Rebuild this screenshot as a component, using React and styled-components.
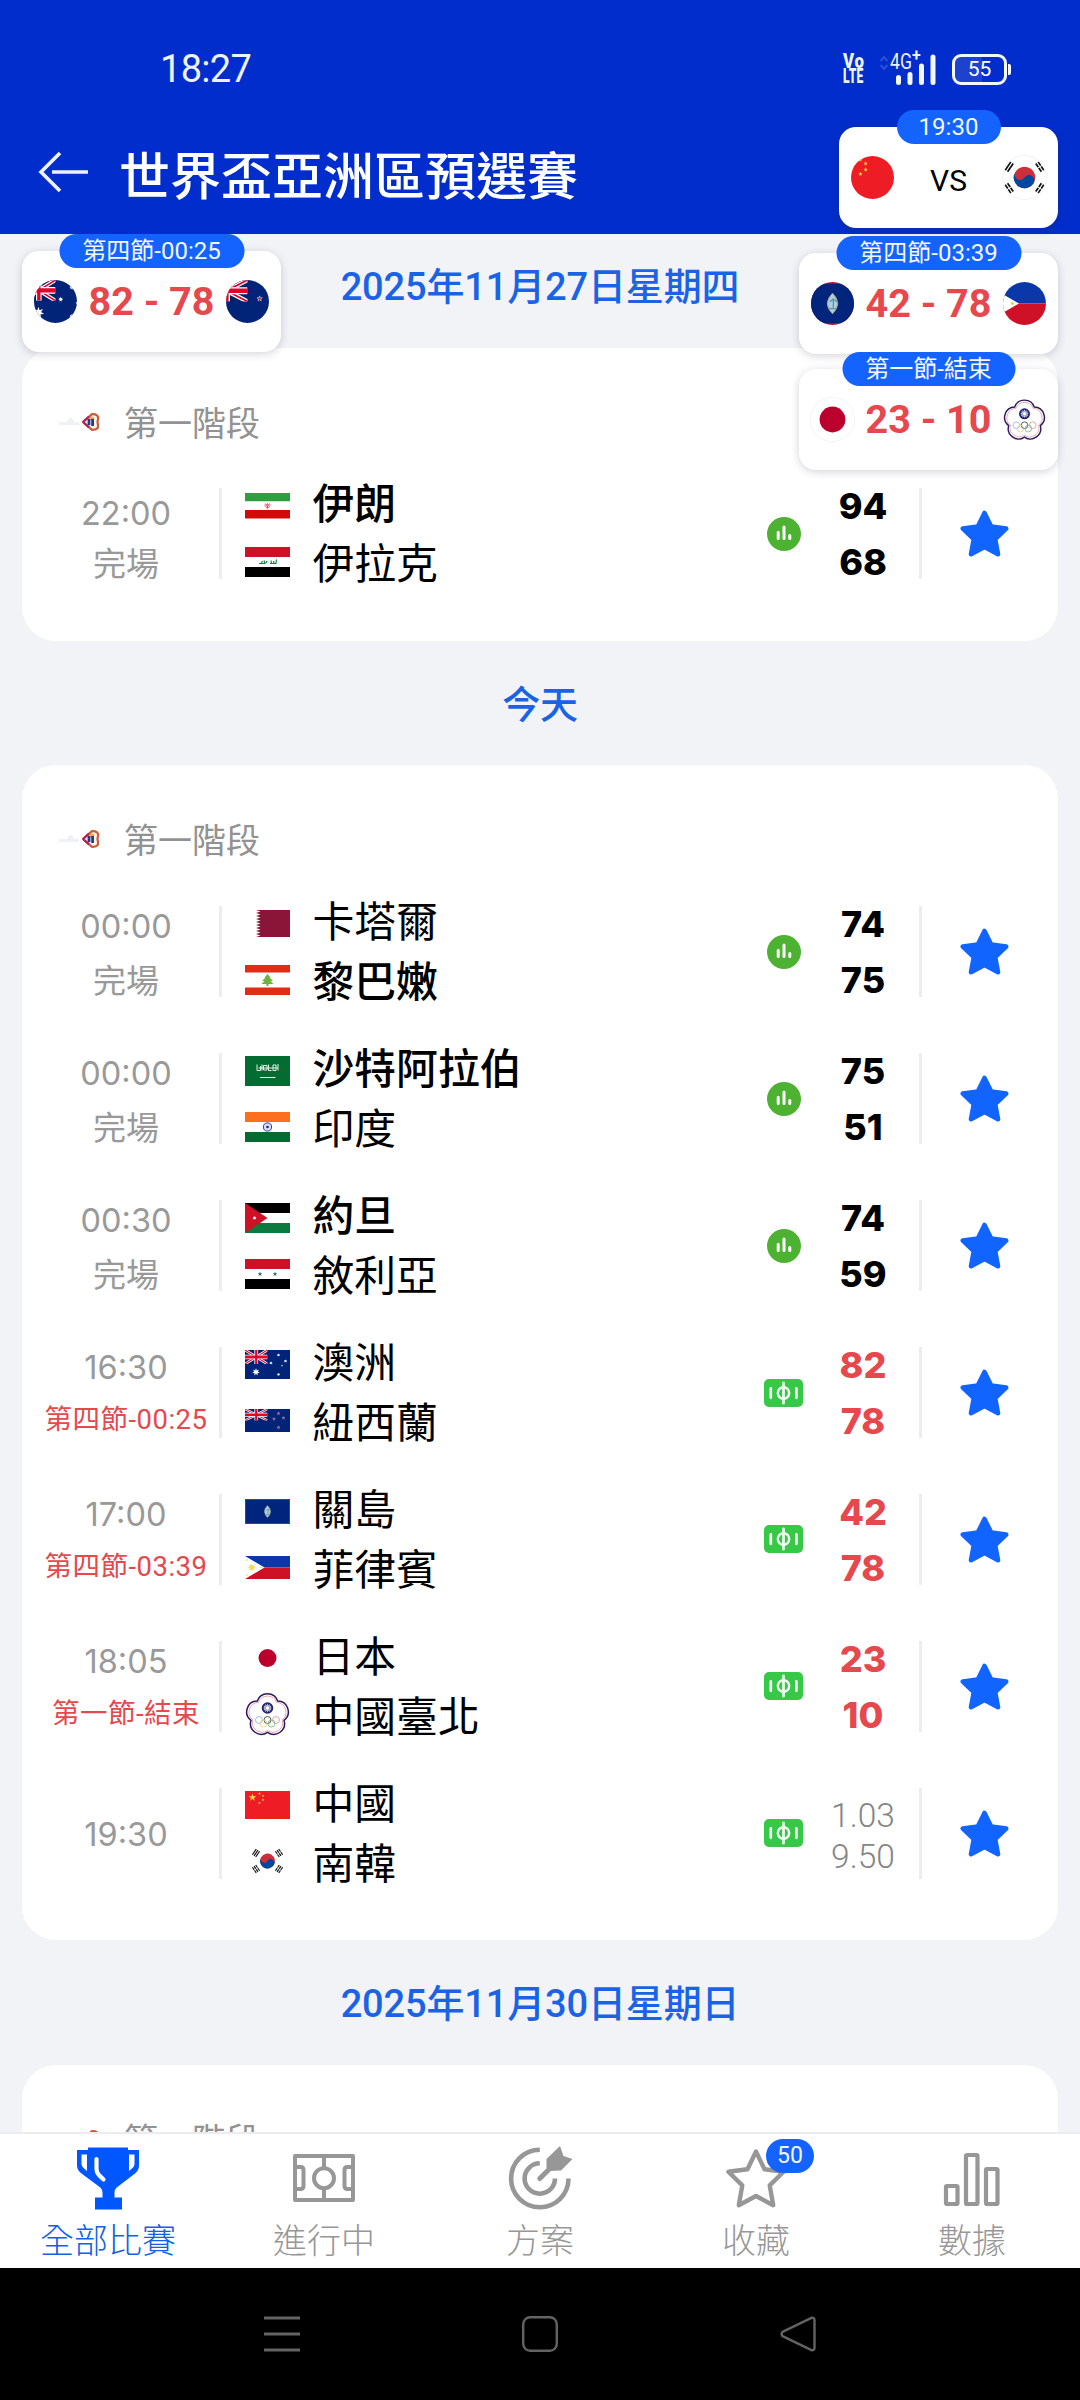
import React from "react";
import styled, { createGlobalStyle } from "styled-components";

const CJK = '"Noto Sans CJK TC", sans-serif';
const BODY = `Roboto, ${CJK}`;
const WIDE = `Inter, ${CJK}`;

const GlobalStyle = createGlobalStyle`
  *, *::before, *::after { box-sizing: border-box; }
  body { margin: 0; background: #f2f3f7; font-family: ${BODY}; }
  svg { display: block; flex: none; }
`;

/* ---------- flags ---------- */

function starPoints(cx, cy, r, n = 5, inner = 0.4) {
  return Array.from({ length: n * 2 }, (_, i) => {
    const rad = i % 2 ? r * inner : r;
    const a = -Math.PI / 2 + (i * Math.PI) / n;
    return `${(cx + rad * Math.cos(a)).toFixed(2)},${(cy + rad * Math.sin(a)).toFixed(2)}`;
  }).join(" ");
}

function blossomPath(cx, cy, valley, r) {
  const pts = Array.from({ length: 5 }, (_, i) => {
    const a = ((-126 + 72 * i) * Math.PI) / 180;
    return [(cx + valley * Math.cos(a)).toFixed(2), (cy + valley * Math.sin(a)).toFixed(2)];
  });
  return (
    `M${pts[0].join(" ")} ` +
    [1, 2, 3, 4, 0].map((i) => `A${r} ${r} 0 0 1 ${pts[i].join(" ")}`).join(" ") +
    "Z"
  );
}

const Jack = ({ h }) => (
  <svg x="0" y="0" width="45" height={h} viewBox="0 0 60 30" preserveAspectRatio="none">
    <rect width="60" height="30" fill="#012169" />
    <path d="M0 0L60 30M60 0L0 30" stroke="#fff" strokeWidth="6" />
    <path d="M0 0L60 30M60 0L0 30" stroke="#e4002b" strokeWidth="2.4" />
    <path d="M30 0V30M0 15H60" stroke="#fff" strokeWidth="10" />
    <path d="M30 0V30M0 15H60" stroke="#e4002b" strokeWidth="6" />
  </svg>
);

const Bands = ({ h, colors }) =>
  colors.map((c, i) => (
    <rect key={i} y={(h / colors.length) * i} width="90" height={h / colors.length} fill={c} />
  ));

const trigram = (x, y, a, broken) => (
  <g key={`${x}-${y}`} transform={`translate(${x} ${y}) rotate(${a})`} stroke="#111" strokeWidth="2.4">
    <path d="M-7 -4H7M-7 0H7M-7 4H7" />
    {broken && <path d="M0 -6V6" stroke="#fff" strokeWidth="1.4" />}
  </g>
);

const FLAGS = {
  iran: {
    h: 51,
    art: (
      <>
        <Bands h={51} colors={["#2f9e41", "#fff", "#d10a0a"]} />
        <path d="M45 20V31M41 21Q38 28 45 30Q52 28 49 21M43 22Q42 26 45 28M47 22Q48 26 45 28" fill="none" stroke="#d8262c" strokeWidth="1.3" />
      </>
    ),
  },
  iraq: {
    h: 60,
    art: (
      <>
        <Bands h={60} colors={["#ce1126", "#fff", "#000"]} />
        <path d="M28 33H40L38 27M33 32L35 28M50 33H63M53 32L52 27M58 32L57 28M62 32L63 25M42 32L44 28" fill="none" stroke="#1c8049" strokeWidth="2.4" />
      </>
    ),
  },
  qatar: {
    h: 54,
    art: (
      <>
        <rect width="90" height="54" fill="#fff" />
        <path d={"M90 0H22" + Array.from({ length: 9 }, (_, i) => `L31 ${i * 6 + 3}L22 ${i * 6 + 6}`).join("") + "H90Z"} fill="#8a1538" />
      </>
    ),
  },
  lebanon: {
    h: 60,
    art: (
      <>
        <rect width="90" height="60" fill="#fff" />
        <path d="M0 0H90V15H0ZM0 45H90V60H0Z" fill="#e12d14" />
        <path d="M45 18L51 25H49L56 32H51L57 38H47V42H43V38H33L39 32H34L41 25H39Z" fill="#6cb33f" />
      </>
    ),
  },
  saudi: {
    h: 60,
    art: (
      <>
        <rect width="90" height="60" fill="#046b31" />
        <path d="M24 17V29H31V20M34 17V29M37 19H44V28H37ZM47 17V29H53M56 18H62V29H56ZM66 16V29M27 24H66" fill="none" stroke="#e3f0e6" strokeWidth="2" />
        <path d="M30 43H61" stroke="#e3f0e6" strokeWidth="2" />
      </>
    ),
  },
  india: {
    h: 60,
    art: (
      <>
        <Bands h={60} colors={["#fb6f1f", "#fff", "#066a31"]} />
        <circle cx="45" cy="30" r="8.2" fill="#dcdcf6" stroke="#3a3aa8" strokeWidth="2" />
        <circle cx="45" cy="30" r="2.6" fill="#20208c" />
      </>
    ),
  },
  jordan: {
    h: 60,
    art: (
      <>
        <Bands h={60} colors={["#000", "#fff", "#0b7a3e"]} />
        <path d="M0 0L45 30L0 60Z" fill="#ce1126" />
        <polygon points={starPoints(19, 30, 4, 7, 0.5)} fill="#fff" />
      </>
    ),
  },
  syria: {
    h: 60,
    art: (
      <>
        <Bands h={60} colors={["#ce1126", "#fff", "#000"]} />
        <polygon points={starPoints(30, 30, 5)} fill="#2d6b5b" />
        <polygon points={starPoints(60, 30, 5)} fill="#2d6b5b" />
      </>
    ),
  },
  australia: {
    h: 58,
    art: (
      <>
        <rect width="90" height="58" fill="#012478" />
        <Jack h={28} />
        <polygon points={starPoints(22, 44, 8, 7, 0.45)} fill="#fff" />
        <polygon points={starPoints(67, 10, 3.6, 7, 0.45)} fill="#fff" />
        <polygon points={starPoints(52, 26, 3.6, 7, 0.45)} fill="#fff" />
        <polygon points={starPoints(81, 22, 3.6, 7, 0.45)} fill="#fff" />
        <polygon points={starPoints(67, 49, 3.6, 7, 0.45)} fill="#fff" />
        <polygon points={starPoints(74, 31, 2.2)} fill="#fff" />
      </>
    ),
  },
  newzealand: {
    h: 46,
    art: (
      <>
        <rect width="90" height="46" fill="#012478" />
        <Jack h={23} />
        {[[67, 9], [58, 20], [77, 18], [67, 37]].map(([x, y]) => (
          <polygon key={`${x}${y}`} points={starPoints(x, y, 3)} fill="#c8102e" stroke="#c9cbe6" strokeWidth="0.7" />
        ))}
      </>
    ),
  },
  guam: {
    h: 50,
    art: (
      <>
        <rect width="90" height="50" fill="#b3143a" />
        <rect x="2" y="2" width="86" height="46" fill="#01257c" />
        <path d="M45 13Q57 25 45 37Q33 25 45 13Z" fill="#a9cfe0" stroke="#c9a27a" strokeWidth="1" />
        <path d="M46 19V30M42 23Q46 18 50 23M41 31H49" fill="none" stroke="#5d93a0" strokeWidth="1.5" />
      </>
    ),
  },
  philippines: {
    h: 46,
    art: (
      <>
        <rect width="90" height="23" fill="#0b38a8" />
        <rect y="23" width="90" height="23" fill="#ce1126" />
        <path d="M0 0L39 23L0 46Z" fill="#fff" />
        <polygon points={starPoints(13.5, 23, 8, 8, 0.55)} fill="#fbd116" opacity="0.8" />
        <circle cx="4" cy="8" r="1.6" fill="#fbd116" />
        <circle cx="4" cy="38" r="1.6" fill="#fbd116" />
        <circle cx="32" cy="23" r="1.6" fill="#fbd116" />
      </>
    ),
  },
  japan: {
    h: 60,
    art: (
      <>
        <rect width="90" height="60" fill="#fff" />
        <circle cx="45" cy="30" r="18" fill="#bc002d" />
      </>
    ),
  },
  taipei: {
    h: 88,
    art: (
      <>
        <path d={blossomPath(45, 46, 34.8, 21.7)} fill="#fff" stroke="#2c1a5c" strokeWidth="3" />
        <path d={blossomPath(45, 46, 31, 19.4)} fill="#fff" stroke="#e79aa8" strokeWidth="1.8" />
        <circle cx="45" cy="32" r="11.5" fill="#20246c" />
        <polygon points={starPoints(45, 32, 9, 12, 0.6)} fill="#fff" />
        <circle cx="45" cy="32" r="4.6" fill="#fff" stroke="#20246c" strokeWidth="1" />
        <g fill="none" strokeWidth="1.6">
          <circle cx="28" cy="56" r="7" stroke="#7fb5dd" />
          <circle cx="45" cy="56" r="7" stroke="#333" />
          <circle cx="62" cy="56" r="7" stroke="#e08a94" />
          <circle cx="37" cy="63" r="7" stroke="#e6cf7a" />
          <circle cx="53" cy="63" r="7" stroke="#6fb584" />
        </g>
      </>
    ),
  },
  china: {
    h: 57,
    art: (
      <>
        <rect width="90" height="57" fill="#ee1c25" />
        <polygon points={starPoints(15, 13, 8)} fill="#ffd83a" />
        {[[29, 5], [36, 10], [36, 18], [29, 24]].map(([x, y]) => (
          <polygon key={`${x}${y}`} points={starPoints(x, y, 3)} fill="#ffd83a" />
        ))}
      </>
    ),
  },
  korea: {
    h: 60,
    art: (
      <>
        <rect width="90" height="60" fill="#fff" />
        <g transform="rotate(33 45 30)">
          <circle cx="45" cy="30" r="15" fill="#cd2e3a" />
          <path d="M30 30A7.5 7.5 0 0 0 45 30A7.5 7.5 0 0 1 60 30A15 15 0 0 1 30 30Z" fill="#0047a0" />
        </g>
        {trigram(22, 14, -56, false)}
        {trigram(68, 14, 56, true)}
        {trigram(22, 46, 56, true)}
        {trigram(68, 46, -56, true)}
      </>
    ),
  },
};

const FlagBox = styled.div`
  display: flex;
  align-items: center;
  width: 45px;
  height: 56px;
`;

const Disc = styled.div`
  width: 43px;
  height: 43px;
  flex: none;
  overflow: hidden;
  border-radius: ${(p) => (p.$plain ? "0" : "50%")};
  box-shadow: ${(p) => (p.$ring ? "0 0 0 1px #f3f3f5" : "none")};
`;

const Flag = ({ name }) => {
  const f = FLAGS[name];
  return (
    <FlagBox>
      <svg width="45" height={f.h / 2} viewBox={`0 0 90 ${f.h}`}>
        {f.art}
      </svg>
    </FlagBox>
  );
};

const RoundFlag = ({ name }) => {
  const f = FLAGS[name];
  return (
    <Disc $ring={name === "japan" || name === "korea"} $plain={name === "taipei"}>
      <svg
        width="43"
        height="43"
        viewBox={`0 0 90 ${f.h}`}
        preserveAspectRatio={name === "taipei" ? "xMidYMid meet" : "xMidYMid slice"}
      >
        {f.art}
      </svg>
    </Disc>
  );
};

/* ---------- page frame ---------- */

const Page = styled.div`
  position: relative;
  display: flex;
  flex-direction: column;
  width: 1080px;
  height: 2400px;
  overflow: hidden;
  background: #f2f3f7;
`;

const TopArea = styled.header`
  flex: none;
  height: 234px;
  background: #002dcb;
  color: #fff;
`;

const StatusBar = styled.div`
  display: flex;
  align-items: center;
  height: 114px;
  padding: 24px 69px 0 160px;
`;

const Clock = styled.span`
  font-size: 38px;
  line-height: 44px;
  letter-spacing: -0.7px;
  color: #eef2ff;
`;

const StatusIcons = styled.div`
  display: flex;
  align-items: center;
  margin-left: auto;
`;

const Volte = styled.div`
  display: flex;
  flex-direction: column;
  width: 22px;
  margin-right: 14px;
  font-weight: 900;
  color: #eef2ff;
`;

const VolteLine = styled.span`
  font-size: ${(p) => p.$size}px;
  line-height: 15.5px;
  height: 15.5px;
  letter-spacing: ${(p) => p.$track}px;
  transform: scaleX(${(p) => p.$squeeze});
  transform-origin: left center;
  white-space: nowrap;
`;

const Signal = styled.div`
  position: relative;
  width: 58px;
  height: 31px;
  margin-right: 15px;
`;

const SignalLabel = styled.span`
  position: absolute;
  left: 11px;
  top: -3px;
  font-size: 22px;
  line-height: 22px;
  color: #eef2ff;
  transform: scaleX(0.8);
  transform-origin: left center;
`;

const SignalPlus = styled.span`
  position: absolute;
  left: 33px;
  top: -7px;
  font-size: 16px;
  font-weight: 700;
  line-height: 17px;
  color: #eef2ff;
`;

const Battery = styled.div`
  display: flex;
  align-items: center;
`;

const BatteryBody = styled.div`
  display: flex;
  align-items: center;
  justify-content: center;
  width: 55px;
  height: 31px;
  border: 3px solid #f4f7ff;
  border-radius: 9px;
  background: linear-gradient(90deg, #1d42cf 55%, #002dcb 55%);
  font-size: 21px;
  line-height: 21px;
`;

const BatteryTip = styled.div`
  width: 3px;
  height: 11px;
  margin-left: 1px;
  border-radius: 0 2px 2px 0;
  background: #f4f7ff;
`;

const TitleRow = styled.div`
  display: flex;
  align-items: center;
  height: 116px;
  padding-left: 38px;
`;

const Title = styled.h1`
  margin: 1px 0 0 30px;
  font-family: ${CJK};
  font-size: 51px;
  font-weight: 500;
  line-height: 60px;
`;

/* ---------- schedule ---------- */

const Schedule = styled.main`
  flex: 1;
  min-height: 0;
  overflow: hidden;
`;

const ScheduleInner = styled.div`
  margin-top: -11px;
  padding: 0 22px;
`;

const DateHeading = styled.h2`
  display: flex;
  align-items: center;
  justify-content: center;
  height: 124.5px;
  margin: 0;
  padding-top: 4px;
  font-size: 38px;
  font-weight: 500;
  line-height: 44px;
  letter-spacing: -0.15px;
  color: #1b63e6;
`;

const Card = styled.section`
  padding-bottom: 33.5px;
  border-radius: 34px;
  background: #fff;
`;

const StageHeader = styled.div`
  display: flex;
  align-items: center;
  height: 113px;
  padding: 35px 0 0 36px;
`;

const StageName = styled.span`
  margin-left: 24px;
  font-family: ${CJK};
  font-size: 34px;
  line-height: 40px;
  color: #929292;
`;

const MatchRow = styled.div`
  display: flex;
  align-items: center;
  height: 146.9px;
  padding: 0 11px;
`;

const TimeCell = styled.div`
  display: flex;
  flex-direction: column;
  align-items: center;
  width: 186px;
  padding-top: ${(p) => (p.$tight ? 7 : 2)}px;
  gap: ${(p) => (p.$tight ? 4 : 8)}px;
  color: #999;
`;

const Kickoff = styled.span`
  font-family: ${WIDE};
  font-size: 32.5px;
  font-weight: 400;
  line-height: 44px;
  padding-top: 1px;
`;

const State = styled.span`
  font-family: ${(p) => (p.$live ? BODY : CJK)};
  font-size: ${(p) => (p.$live ? 27.5 : 33)}px;
  letter-spacing: ${(p) => (p.$live ? 0.5 : 0)}px;
  line-height: 44px;
  white-space: nowrap;
  color: ${(p) => (p.$live ? "#e5484d" : "#999")};
`;

const Rule = styled.div`
  width: 3px;
  height: 91px;
  background: #ededee;
`;

const FlagColumn = styled.div`
  margin-left: 23px;
`;

const NameColumn = styled.div`
  flex: 1;
  margin: -5px 0 0 22.500px;
`;

const TeamName = styled.div`
  height: 60px;
  font-family: ${CJK};
  font-size: 41.8px;
  font-weight: ${(p) => (p.$winner ? 500 : 400)};
  line-height: 60px;
  color: #000;
`;

const BadgeCell = styled.div`
  display: flex;
  justify-content: center;
  width: 47px;
`;

const ScoreCell = styled.div`
  display: flex;
  flex-direction: column;
  align-items: center;
  width: 112px;
  padding-top: ${(p) => (p.$odds ? 5 : 1)}px;
`;

const Score = styled.span`
  font-family: ${WIDE};
  font-size: 36px;
  font-weight: 800;
  line-height: 56px;
  color: ${(p) => (p.$live ? "#e5484d" : "#000")};
`;

const Odds = styled.span`
  font-size: 33.5px;
  font-weight: 300;
  line-height: 41px;
  color: #858585;
`;

const StarCell = styled.div`
  display: flex;
  justify-content: center;
  width: 125px;
`;

const StageLogo = () => (
  <svg width="42" height="22" viewBox="0 0 42 22">
    <path d="M1 14H21V11H16L14 7H11L9 11H1Z" fill="#f0f0f8" />
    <path d="M25 11L34 3.2Q41 3 40 8Q39 11 40 14Q41 19 34 18.8Z" fill="#fdf3ef" stroke="#cf5a34" strokeWidth="2.2" strokeLinejoin="round" />
    <path d="M25 11L31 5.6M25 11L31 16.4" stroke="#a8275d" strokeWidth="2.2" />
    <circle cx="34" cy="7.6" r="2.2" fill="#f0a73c" />
    <path d="M31 8V14M34.6 8V15" stroke="#243a8f" strokeWidth="2.8" />
  </svg>
);

const StatsBadge = () => (
  <svg width="34" height="34" viewBox="0 0 34 34">
    <circle cx="17" cy="17" r="17" fill="#4db132" />
    <path d="M11.2 15.2V21.4M17 10V21.4M22.8 18.4V21.4" stroke="#fff" strokeWidth="3" strokeLinecap="round" />
  </svg>
);

const CourtBadge = () => (
  <svg width="39" height="28" viewBox="0 0 39 28">
    <rect width="39" height="28" rx="5" fill="#37c847" />
    <circle cx="19.5" cy="14" r="5.7" fill="none" stroke="#f1fff2" strokeWidth="2.4" />
    <path d="M19.5 3.8V24.2M6.8 9.4V18.8M32.4 9.4V18.8" stroke="#f1fff2" strokeWidth="2.7" strokeLinecap="round" />
  </svg>
);

const STAR =
  "M24.5 3L31.2 16.6L46.2 18.6L35.2 29.2L38 44.2L24.5 37L11 44.2L13.8 29.2L2.8 18.6L17.8 16.6Z";

const FavoriteStar = () => (
  <svg width="49" height="47" viewBox="0 0 49 47">
    <path d={STAR} fill="#1264ff" stroke="#1264ff" strokeWidth="4.6" strokeLinejoin="round" />
  </svg>
);

const Match = ({ time, state, live, tight, home, away, scores, odds, winner }) => (
  <MatchRow>
    <TimeCell $tight={tight}>
      <Kickoff>{time}</Kickoff>
      {state && <State $live={live}>{state}</State>}
    </TimeCell>
    <Rule />
    <FlagColumn>
      <Flag name={home[0]} />
      <Flag name={away[0]} />
    </FlagColumn>
    <NameColumn>
      <TeamName $winner={winner === 0}>{home[1]}</TeamName>
      <TeamName $winner={winner === 1}>{away[1]}</TeamName>
    </NameColumn>
    <BadgeCell>{live || odds ? <CourtBadge /> : <StatsBadge />}</BadgeCell>
    <ScoreCell $odds={!!odds}>
      {odds
        ? odds.map((o) => <Odds key={o}>{o}</Odds>)
        : scores.map((s) => (
            <Score key={s} $live={live}>
              {s}
            </Score>
          ))}
    </ScoreCell>
    <Rule />
    <StarCell>
      <FavoriteStar />
    </StarCell>
  </MatchRow>
);

const Stage = ({ matches }) => (
  <Card>
    <StageHeader>
      <StageLogo />
      <StageName>第一階段</StageName>
    </StageHeader>
    {matches.map((m) => (
      <Match key={m.home[0]} {...m} />
    ))}
  </Card>
);

const DAYS = [
  {
    label: "2025年11月27日星期四",
    matches: [
      { time: "22:00", state: "完場", tight: true, home: ["iran", "伊朗"], away: ["iraq", "伊拉克"], scores: [94, 68], winner: 0 },
    ],
  },
  {
    label: "今天",
    matches: [
      { time: "00:00", state: "完場", home: ["qatar", "卡塔爾"], away: ["lebanon", "黎巴嫩"], scores: [74, 75], winner: 1 },
      { time: "00:00", state: "完場", home: ["saudi", "沙特阿拉伯"], away: ["india", "印度"], scores: [75, 51], winner: 0 },
      { time: "00:30", state: "完場", home: ["jordan", "約旦"], away: ["syria", "敘利亞"], scores: [74, 59], winner: 0 },
      { time: "16:30", state: "第四節-00:25", live: true, home: ["australia", "澳洲"], away: ["newzealand", "紐西蘭"], scores: [82, 78] },
      { time: "17:00", state: "第四節-03:39", live: true, home: ["guam", "關島"], away: ["philippines", "菲律賓"], scores: [42, 78] },
      { time: "18:05", state: "第一節-結束", live: true, home: ["japan", "日本"], away: ["taipei", "中國臺北"], scores: [23, 10] },
      { time: "19:30", home: ["china", "中國"], away: ["korea", "南韓"], odds: ["1.03", "9.50"] },
    ],
  },
  { label: "2025年11月30日星期日", matches: [] },
];

/* ---------- floating score bubbles ---------- */

const Bubble = styled.div`
  position: absolute;
  left: ${(p) => p.$left}px;
  top: ${(p) => p.$top}px;
  display: flex;
  align-items: center;
  justify-content: space-between;
  width: ${(p) => p.$width}px;
  height: 101px;
  padding: 0 12px;
  border-radius: 17px;
  background: #fff;
  box-shadow: 0 2px 9px rgba(40, 40, 60, 0.2);
`;

const BubblePill = styled.div`
  position: absolute;
  left: 50%;
  top: -17px;
  width: ${(p) => p.$width}px;
  height: 34px;
  border-radius: 17px;
  background: #1463ff;
  transform: translateX(-50%);
  font-size: 24px;
  line-height: 34px;
  text-align: center;
  white-space: nowrap;
  color: #f2f7ff;
`;

const BubbleScore = styled.span`
  font-size: ${(p) => (p.$versus ? 30 : 39.5)}px;
  font-weight: ${(p) => (p.$versus ? 400 : 700)};
  line-height: 46px;
  padding-top: ${(p) => (p.$versus ? 6 : 1)}px;
  color: ${(p) => (p.$versus ? "#000" : "#e5484d")};
  white-space: nowrap;
`;

const BUBBLES = [
  { left: 839, top: 127, width: 219, pill: 104, label: "19:30", flags: ["china", "korea"], text: "VS", versus: true },
  { left: 22, top: 251, width: 259, pill: 185, label: "第四節-00:25", flags: ["australia", "newzealand"], text: "82 - 78" },
  { left: 799, top: 253, width: 259, pill: 185, label: "第四節-03:39", flags: ["guam", "philippines"], text: "42 - 78" },
  { left: 799, top: 369, width: 259, pill: 173, label: "第一節-結束", flags: ["japan", "taipei"], text: "23 - 10" },
];

const FloatingBubble = ({ left, top, width, pill, label, flags, text, versus }) => (
  <Bubble $left={left} $top={top} $width={width}>
    <BubblePill $width={pill}>{label}</BubblePill>
    <RoundFlag name={flags[0]} />
    <BubbleScore $versus={versus}>{text}</BubbleScore>
    <RoundFlag name={flags[1]} />
  </Bubble>
);

/* ---------- bottom bars ---------- */

const TabBar = styled.nav`
  display: flex;
  flex: none;
  height: 136px;
  border-top: 2px solid #ececee;
  background: #fff;
`;

const Tab = styled.div`
  display: flex;
  flex: 1;
  flex-direction: column;
  align-items: center;
  padding-top: 12px;
  color: ${(p) => (p.$active ? "#1260e6" : "#979797")};
`;

const TabIcon = styled.div`
  position: relative;
  width: 66px;
  height: 66px;
`;

const TabLabel = styled.span`
  margin-top: 4px;
  font-family: ${CJK};
  font-size: 34px;
  font-weight: 300;
  line-height: 46px;
`;

const CountBadge = styled.span`
  position: absolute;
  left: 43px;
  top: -7px;
  width: 48px;
  height: 34px;
  border-radius: 17px;
  background: #1463ff;
  font-size: 23px;
  line-height: 33px;
  text-align: center;
  color: #f2f7ff;
`;

const SystemNav = styled.div`
  display: flex;
  flex: none;
  align-items: center;
  justify-content: center;
  gap: 222px;
  height: 132px;
  background: #000;
`;

const icons = {
  trophy: (
    <>
      <path d="M13 1.5H53V4H64V19.5Q64 24 60 27.5L43 40.5Q39.5 43 39.5 46.5V51.5H47V63.5H20V51.5H27.5V46.5Q27.5 43 24 40.5L6.5 27.5Q2 24 2 19.5V4H13Z" fill="#0057ff" />
      <path d="M6.5 8.5H12V25L8.5 22Q6.5 20.5 6.5 18ZM59.5 8.5H54V25L57.5 22Q59.5 20.5 59.5 18Z" fill="#fff" />
      <path d="M21.5 13V23Q21.5 26 23.5 28.5L28.5 33.5" fill="none" stroke="#fff" strokeWidth="4.2" strokeLinecap="round" />
    </>
  ),
  court: (
    <g fill="none" stroke="#979797" strokeWidth="4" strokeLinejoin="round">
      <rect x="4" y="10" width="58" height="44" />
      <path d="M33 10V21.5M33 43V54" />
      <circle cx="33" cy="32.2" r="10" />
      <path d="M4 21H9.5Q12.5 21 12.5 24V40Q12.5 43 9.5 43H4M62 21H56.5Q53.5 21 53.5 24V40Q53.5 43 56.5 43H62" />
    </g>
  ),
  target: (
    <>
      <path d="M61.5 32.5A28.7 28.7 0 1 1 32.8 3.8" fill="none" stroke="#979797" strokeWidth="4.6" />
      <path d="M48 32.5A15.2 15.2 0 1 1 32.8 17.3" fill="none" stroke="#979797" strokeWidth="4.6" />
      <path d="M32.8 32.5L46 19.5" stroke="#979797" strokeWidth="5" strokeLinecap="round" />
      <path d="M53 0L56.5 10L65.5 13L54 24.5L42 25L39.5 22V13Z" fill="#979797" />
    </>
  ),
  star: (
    <path d="M33 5.5L41.5 23.3L60.6 25.8L46.7 39.4L50.2 59.2L33 50L15.8 59.2L19.3 39.4L5.4 25.8L24.5 23.3Z" fill="none" stroke="#979797" strokeWidth="4.4" strokeLinejoin="round" />
  ),
  bars: (
    <g fill="none" stroke="#979797" strokeWidth="4.2" strokeLinejoin="round">
      <rect x="7" y="40" width="11.5" height="18" rx="1" />
      <rect x="27" y="9" width="11.5" height="49" rx="1" />
      <rect x="47" y="23" width="11.5" height="35" rx="1" />
    </g>
  ),
};

const TABS = [
  { icon: "trophy", label: "全部比賽", active: true },
  { icon: "court", label: "進行中" },
  { icon: "target", label: "方案" },
  { icon: "star", label: "收藏", count: 50 },
  { icon: "bars", label: "數據" },
];

export default function App() {
  return (
    <>
      <GlobalStyle />
      <Page>
        <TopArea>
          <StatusBar>
            <Clock>18:27</Clock>
            <StatusIcons>
              <Volte>
                <VolteLine $size={20} $track={1} $squeeze={0.84}>Vo</VolteLine>
                <VolteLine $size={19.5} $track={0.5} $squeeze={0.62}>LTE</VolteLine>
              </Volte>
              <Signal>
                <svg width="58" height="31" viewBox="0 0 58 31">
                  <path d="M1.5 7L5 3L8.5 7M1.5 11L5 15L8.5 11" fill="none" stroke="#2c50dc" strokeWidth="2" />
                  <path d="M19.5 23.5V28.5M31 20.5V28.5M42.5 12V28.5M54 3V28.5" stroke="#f4f7ff" strokeWidth="5" strokeLinecap="round" />
                </svg>
                <SignalLabel>4G</SignalLabel>
                <SignalPlus>+</SignalPlus>
              </Signal>
              <Battery>
                <BatteryBody>55</BatteryBody>
                <BatteryTip />
              </Battery>
            </StatusIcons>
          </StatusBar>
          <TitleRow>
            <svg width="51" height="42" viewBox="0 0 51 42">
              <path d="M22 2L3 21L22 40M14 21H50" fill="none" stroke="#eef2ff" strokeWidth="3.6" />
            </svg>
            <Title>世界盃亞洲區預選賽</Title>
          </TitleRow>
        </TopArea>

        <Schedule>
          <ScheduleInner>
            {DAYS.map((d) => (
              <React.Fragment key={d.label}>
                <DateHeading>{d.label}</DateHeading>
                <Stage matches={d.matches} />
              </React.Fragment>
            ))}
          </ScheduleInner>
        </Schedule>

        <TabBar>
          {TABS.map((t) => (
            <Tab key={t.label} $active={t.active}>
              <TabIcon>
                <svg width="66" height="66" viewBox="0 0 66 66">
                  {icons[t.icon]}
                </svg>
                {t.count && <CountBadge>{t.count}</CountBadge>}
              </TabIcon>
              <TabLabel>{t.label}</TabLabel>
            </Tab>
          ))}
        </TabBar>

        <SystemNav>
          <svg width="36" height="36" viewBox="0 0 36 36">
            <path d="M0 2H36M0 18H36M0 34H36" stroke="#636363" strokeWidth="3" />
          </svg>
          <svg width="36" height="36" viewBox="0 0 36 36">
            <rect x="1.2" y="1.2" width="33.6" height="33.6" rx="7" fill="none" stroke="#636363" strokeWidth="2.4" />
          </svg>
          <svg width="36" height="36" viewBox="0 0 36 36">
            <path d="M31.5 1.8L2.5 15.8Q0.8 18 2.5 20.2L31.5 34.2Q34.5 34.5 34.5 32V4Q34.5 1.5 31.5 1.8Z" fill="none" stroke="#636363" strokeWidth="2.4" strokeLinejoin="round" />
          </svg>
        </SystemNav>

        {BUBBLES.map((b) => (
          <FloatingBubble key={b.text} {...b} />
        ))}
      </Page>
    </>
  );
}
